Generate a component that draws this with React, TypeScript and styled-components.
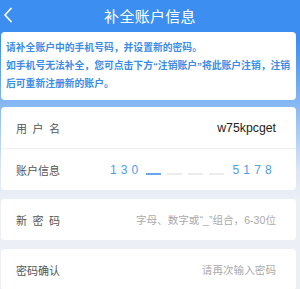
import styled, {createGlobalStyle} from 'styled-components';

const GlobalStyle = createGlobalStyle`
  html, body {
    margin: 0;
    padding: 0;
  }
  body {
    font-family: "Liberation Sans", "Noto Sans CJK SC", sans-serif;
    background: #eef1f6;
  }
`;

const Page = styled.div`
  width: 300px;
  height: 289px;
  overflow: hidden;
  background: linear-gradient(180deg, #3c8ff0 0px, #3c8ff0 40px, #8dbcf3 110px, #dbe6f5 170px, #eceff6 200px);
`;

const Header = styled.div`
  height: 31px;
  display: flex;
  align-items: center;
  justify-content: center;
  position: relative;
  color: #fff;
  font-size: 15px;
  letter-spacing: 0.3px;
`;

const BackButton = styled.div`
  position: absolute;
  left: 3px;
  top: 7px;
  width: 10px;
  height: 16px;
  display: flex;
`;

const Content = styled.div`
  display: flex;
  flex-direction: column;
  padding: 1px 4px 0 1px;
`;

const Card = styled.div<{$gap?: number}>`
  background: #fff;
  border-radius: 4px;
  margin-top: ${p => p.$gap ?? 0}px;
`;

const Notice = styled(Card)`
  padding: 7px 4px 7px 5px;
  color: #3b8ce6;
  font-size: 9.8px;
  font-weight: 700;
  line-height: 18px;
`;

const Row = styled.div<{$divider?: boolean}>`
  height: 41px;
  display: flex;
  align-items: center;
  justify-content: space-between;
  padding: 0 20px 0 15px;
  border-top: ${p => (p.$divider ? '1px solid #eff0f3' : 'none')};
`;

const Label = styled.div<{$spread?: boolean}>`
  color: #555;
  font-size: 11px;
  letter-spacing: ${p => (p.$spread ? '5.5px' : '0')};
`;

const Value = styled.div`
  color: #222;
  font-size: 12.3px;
`;

const Placeholder = styled.div`
  color: #aaa;
  font-size: 10.6px;
`;

const Phone = styled.div`
  display: flex;
  align-items: center;
  color: #4e9de9;
  font-size: 12px;
  letter-spacing: 4.2px;
`;

const Digits = styled.span<{$side: 'left' | 'right'}>`
  margin-${p => p.$side}: 3px;
`;

const Blank = styled.span<{$active?: boolean}>`
  display: inline-block;
  width: 15px;
  height: 2px;
  margin: 8px 6px 0 0;
  background: ${p => (p.$active ? '#62a9ee' : '#ececef')};
`;

export default function App() {
  return (
    <>
      <GlobalStyle />
      <Page>
        <Header>
          <BackButton>
            <svg width="10" height="16" viewBox="0 0 10 16">
              <path d="M8 1.5 L2 8 L8 14.5" fill="none" stroke="#fff" strokeWidth="1.8" strokeLinecap="round" strokeLinejoin="round" />
            </svg>
          </BackButton>
          补全账户信息
        </Header>
        <Content>
          <Notice>
            请补全账户中的手机号码，并设置新的密码。
            <br />
            如手机号无法补全，您可点击下方“注销账户”将此账户注销，注销后可重新注册新的账户。
          </Notice>
          <Card $gap={7}>
            <Row>
              <Label $spread>用户名</Label>
              <Value>w75kpcget</Value>
            </Row>
            <Row $divider>
              <Label>账户信息</Label>
              <Phone>
                <Digits $side="right">130</Digits>
                <Blank $active />
                <Blank />
                <Blank />
                <Blank />
                <Digits $side="left">5178</Digits>
              </Phone>
            </Row>
          </Card>
          <Card $gap={9}>
            <Row>
              <Label $spread>新密码</Label>
              <Placeholder>字母、数字或“_”组合，6-30位</Placeholder>
            </Row>
          </Card>
          <Card $gap={9}>
            <Row>
              <Label>密码确认</Label>
              <Placeholder>请再次输入密码</Placeholder>
            </Row>
          </Card>
        </Content>
      </Page>
    </>
  );
}
